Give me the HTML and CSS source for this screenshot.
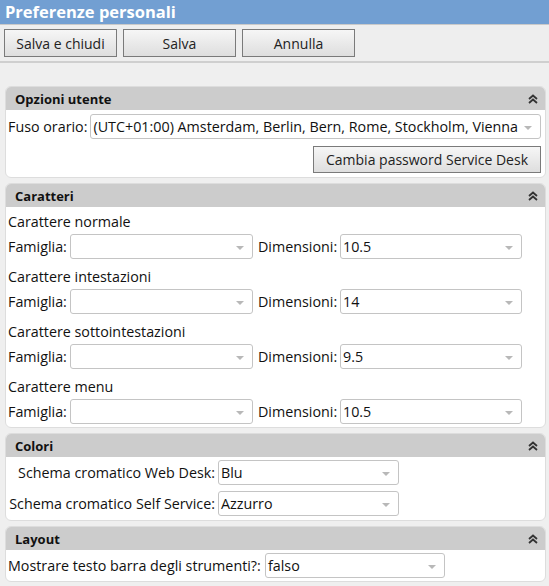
FILE: index.html
```html
<!DOCTYPE html>
<html lang="it">
<head>
<meta charset="utf-8">
<title>Preferenze personali</title>
<link rel="stylesheet" href="styles.css">
</head>
<body>
<div class="titlebar">Preferenze personali</div>
<div class="toolbar">
  <button class="btn">Salva e chiudi</button>
  <button class="btn">Salva</button>
  <button class="btn">Annulla</button>
</div>
<div class="content">

  <section class="panel">
    <div class="panel-head"><span>Opzioni utente</span><svg class="chev" viewBox="0 0 10 10" width="10" height="10"><path d="M1 5 L5 1.5 L9 5 M1 9 L5 5.5 L9 9" fill="none" stroke="#333" stroke-width="1.8"/></svg></div>
    <div class="panel-body user-body">
      <div class="row">
        <span class="lbl">Fuso orario:</span>
        <div class="combo w-tz"><span>(UTC+01:00) Amsterdam, Berlin, Bern, Rome, Stockholm, Vienna</span><i class="arrow"></i></div>
      </div>
      <div class="row right">
        <button class="btn btn-pwd">Cambia password Service Desk</button>
      </div>
    </div>
  </section>

  <section class="panel">
    <div class="panel-head"><span>Caratteri</span><svg class="chev" viewBox="0 0 10 10" width="10" height="10"><path d="M1 5 L5 1.5 L9 5 M1 9 L5 5.5 L9 9" fill="none" stroke="#333" stroke-width="1.8"/></svg></div>
    <div class="panel-body font-body">
      <div class="group">
        <div class="group-title">Carattere normale</div>
        <div class="row">
          <span class="lbl lbl-fam">Famiglia:</span>
          <div class="combo w-fam"><span></span><i class="arrow"></i></div>
          <span class="lbl lbl-dim">Dimensioni:</span>
          <div class="combo w-dim"><span>10.5</span><i class="arrow"></i></div>
        </div>
      </div>
      <div class="group">
        <div class="group-title">Carattere intestazioni</div>
        <div class="row">
          <span class="lbl lbl-fam">Famiglia:</span>
          <div class="combo w-fam"><span></span><i class="arrow"></i></div>
          <span class="lbl lbl-dim">Dimensioni:</span>
          <div class="combo w-dim"><span>14</span><i class="arrow"></i></div>
        </div>
      </div>
      <div class="group">
        <div class="group-title">Carattere sottointestazioni</div>
        <div class="row">
          <span class="lbl lbl-fam">Famiglia:</span>
          <div class="combo w-fam"><span></span><i class="arrow"></i></div>
          <span class="lbl lbl-dim">Dimensioni:</span>
          <div class="combo w-dim"><span>9.5</span><i class="arrow"></i></div>
        </div>
      </div>
      <div class="group">
        <div class="group-title">Carattere menu</div>
        <div class="row">
          <span class="lbl lbl-fam">Famiglia:</span>
          <div class="combo w-fam"><span></span><i class="arrow"></i></div>
          <span class="lbl lbl-dim">Dimensioni:</span>
          <div class="combo w-dim"><span>10.5</span><i class="arrow"></i></div>
        </div>
      </div>
    </div>
  </section>

  <section class="panel">
    <div class="panel-head"><span>Colori</span><svg class="chev" viewBox="0 0 10 10" width="10" height="10"><path d="M1 5 L5 1.5 L9 5 M1 9 L5 5.5 L9 9" fill="none" stroke="#333" stroke-width="1.8"/></svg></div>
    <div class="panel-body color-body">
      <div class="row">
        <span class="lbl lbl-col">Schema cromatico Web Desk:</span>
        <div class="combo w-col"><span>Blu</span><i class="arrow"></i></div>
      </div>
      <div class="row">
        <span class="lbl lbl-col">Schema cromatico Self Service:</span>
        <div class="combo w-col"><span>Azzurro</span><i class="arrow"></i></div>
      </div>
    </div>
  </section>

  <section class="panel">
    <div class="panel-head"><span>Layout</span><svg class="chev" viewBox="0 0 10 10" width="10" height="10"><path d="M1 5 L5 1.5 L9 5 M1 9 L5 5.5 L9 9" fill="none" stroke="#333" stroke-width="1.8"/></svg></div>
    <div class="panel-body layout-body">
      <div class="row">
        <span class="lbl lbl-lay">Mostrare testo barra degli strumenti?:</span>
        <div class="combo w-lay"><span>falso</span><i class="arrow"></i></div>
      </div>
    </div>
  </section>

</div>
</body>
</html>
```

FILE: styles.css
```css
* { box-sizing: border-box; }
html, body { margin: 0; padding: 0; }
body {
  width: 549px;
  height: 586px;
  overflow: hidden;
  background: #efefef;
  font-family: "Open Sans", "Noto Sans", sans-serif;
  font-size: 14.3px;
  line-height: 20px;
  color: #111;
}
.titlebar {
  height: 25px;
  background: #729fd2;
  border-bottom: 1px solid #c9c9c9;
  color: #fff;
  font-weight: bold;
  font-size: 16.5px;
  line-height: 24px;
  padding-left: 5px;
}
.toolbar {
  height: 38px;
  background: #eeeeee;
  border-bottom: 2px solid #cfcfcf;
  padding: 4px 0 0 4px;
  display: flex;
  gap: 6px;
}
.btn {
  font-family: inherit;
  font-size: 14px;
  color: #222;
  height: 28px;
  width: 113px;
  border: 1px solid #7a7a7a;
  background: linear-gradient(#f6f6f6, #dedede);
  padding: 0;
  margin: 0;
}
.content {
  padding: 23px 3px 0 5px;
}
.panel {
  border: 1px solid #dddddd;
  border-radius: 6px;
  background: #fff;
  margin-bottom: 5px;
  overflow: hidden;
}
.panel-head {
  height: 23px;
  background: #cccccc;
  display: flex;
  align-items: center;
  justify-content: space-between;
  padding: 0 7px 0 9px;
  font-weight: bold;
  font-size: 13px;
  color: #111;
}
.chev { display: block; }
.panel-body { padding: 0 4px 0 2px; }
.row {
  display: flex;
  align-items: center;
  height: 25px;
}
.row.right { justify-content: flex-end; }
.lbl { white-space: nowrap; padding-right: 3px; }
.combo {
  position: relative;
  height: 25px;
  border: 1px solid #c4c4c4;
  border-radius: 3px;
  background: #fff;
  display: flex;
  align-items: center;
  padding-left: 2px;
  white-space: nowrap;
  overflow: hidden;
}
.arrow {
  position: absolute;
  right: 8px;
  top: 11px;
  width: 0;
  height: 0;
  border-left: 4px solid transparent;
  border-right: 4px solid transparent;
  border-top: 4px solid #b8b8b8;
}
.user-body { padding-top: 4px; padding-bottom: 4px; }
.user-body .row + .row { margin-top: 7px; height: 27px; }
.w-tz { width: 451px; margin-left: auto; }
.btn-pwd { width: 228px; height: 27px; font-size: 14px; }

.font-body { padding-top: 3px; padding-bottom: 3px; }
.group + .group { margin-top: 6px; }
.group-title { height: 24px; line-height: 24px; }
.lbl-fam { width: 62px; }
.w-fam { width: 183px; }
.lbl-dim { width: 87px; padding-left: 5px; }
.w-dim { width: 182px; }

.color-body { padding-top: 3px; padding-bottom: 4px; }
.color-body .row + .row { margin-top: 6px; }
.lbl-col { width: 210px; text-align: right; }
.w-col { width: 181px; }

.layout-body { padding-top: 3px; padding-bottom: 3px; }
.lbl-lay { width: 257px; }
.w-lay { width: 180px; }
```
